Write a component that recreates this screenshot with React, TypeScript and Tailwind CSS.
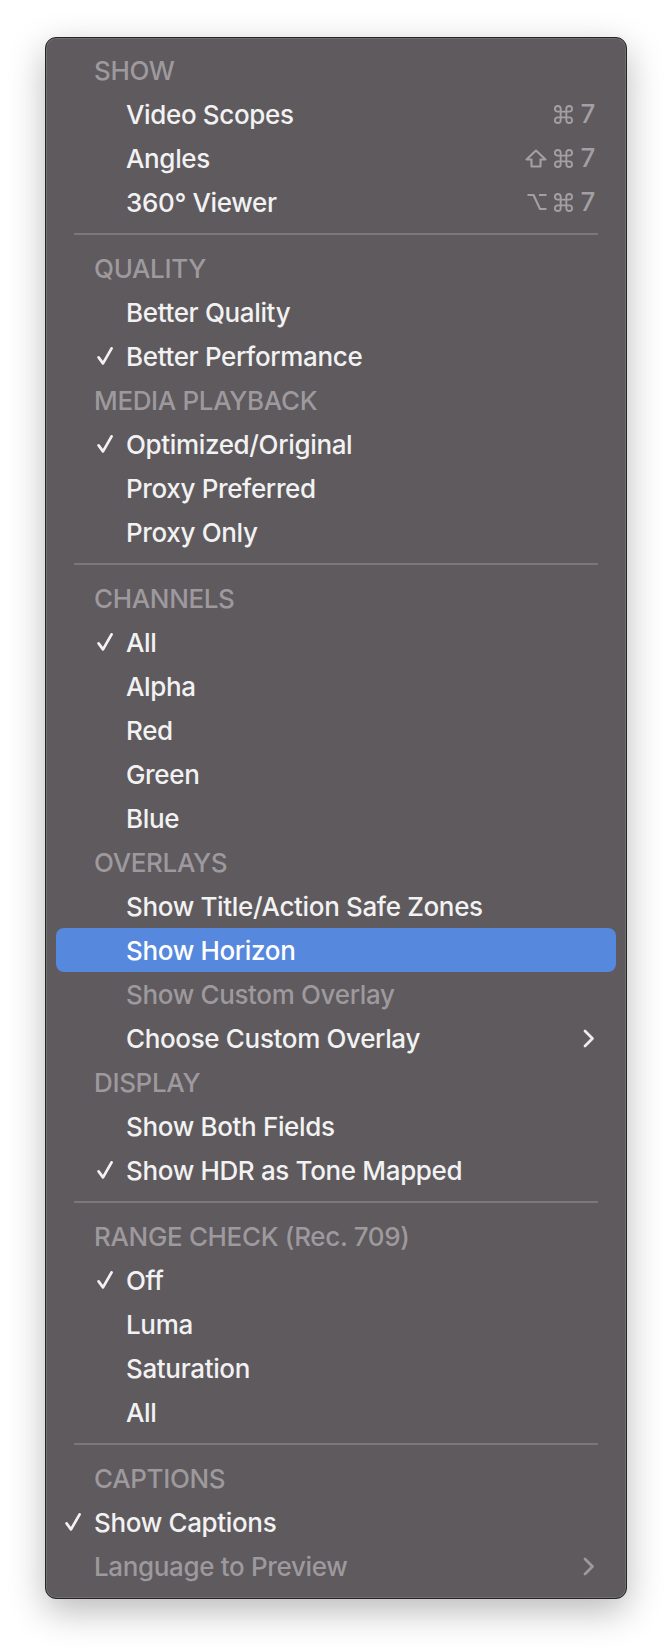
import React from "react";

type Row =
  | { kind: "header"; label: string }
  | { kind: "sep" }
  | {
      kind: "item";
      label: string;
      checked?: boolean;
      disabled?: boolean;
      highlight?: boolean;
      shortcut?: "cmd" | "shift" | "opt";
      submenu?: boolean;
      flush?: boolean;
    };

const rows: Row[] = [
  { kind: "header", label: "SHOW" },
  { kind: "item", label: "Video Scopes", shortcut: "cmd" },
  { kind: "item", label: "Angles", shortcut: "shift" },
  { kind: "item", label: "360° Viewer", shortcut: "opt" },
  { kind: "sep" },
  { kind: "header", label: "QUALITY" },
  { kind: "item", label: "Better Quality" },
  { kind: "item", label: "Better Performance", checked: true },
  { kind: "header", label: "MEDIA PLAYBACK" },
  { kind: "item", label: "Optimized/Original", checked: true },
  { kind: "item", label: "Proxy Preferred" },
  { kind: "item", label: "Proxy Only" },
  { kind: "sep" },
  { kind: "header", label: "CHANNELS" },
  { kind: "item", label: "All", checked: true },
  { kind: "item", label: "Alpha" },
  { kind: "item", label: "Red" },
  { kind: "item", label: "Green" },
  { kind: "item", label: "Blue" },
  { kind: "header", label: "OVERLAYS" },
  { kind: "item", label: "Show Title/Action Safe Zones" },
  { kind: "item", label: "Show Horizon", highlight: true },
  { kind: "item", label: "Show Custom Overlay", disabled: true },
  { kind: "item", label: "Choose Custom Overlay", submenu: true },
  { kind: "header", label: "DISPLAY" },
  { kind: "item", label: "Show Both Fields" },
  { kind: "item", label: "Show HDR as Tone Mapped", checked: true },
  { kind: "sep" },
  { kind: "header", label: "RANGE CHECK (Rec. 709)" },
  { kind: "item", label: "Off", checked: true },
  { kind: "item", label: "Luma" },
  { kind: "item", label: "Saturation" },
  { kind: "item", label: "All" },
  { kind: "sep" },
  { kind: "header", label: "CAPTIONS" },
  { kind: "item", label: "Show Captions", checked: true, flush: true },
  { kind: "item", label: "Language to Preview", disabled: true, submenu: true, flush: true },
];

function Check() {
  return (
    <svg width="16" height="18" viewBox="0 0 16 18" fill="none">
      <path d="M1.6 10.4 L6 16.4 L14.6 1.4" stroke="#f2f2f2" strokeWidth="2.7" strokeLinecap="round" strokeLinejoin="round" />
    </svg>
  );
}

function Cmd() {
  return (
    <svg width="19" height="19" viewBox="0 0 20 20" fill="none">
      <path
        d="M7 7 V4 A3 3 0 1 0 4 7 H16 A3 3 0 1 0 13 4 V16 A3 3 0 1 0 16 13 H4 A3 3 0 1 0 7 16 Z"
        stroke="#a39fa3"
        strokeWidth="2"
      />
    </svg>
  );
}

function Shift() {
  return (
    <svg width="22" height="19" viewBox="0 0 22 19" fill="none">
      <path d="M11 1.5 L20.5 10.5 H15.5 V17.5 H6.5 V10.5 H1.5 Z" stroke="#a39fa3" strokeWidth="2.1" strokeLinejoin="round" />
    </svg>
  );
}

function Opt() {
  return (
    <svg width="20" height="18" viewBox="0 0 20 18" fill="none">
      <path d="M0.5 2 H6.5 L13 16 H19.5 M12 2 H19.5" stroke="#a39fa3" strokeWidth="2.2" />
    </svg>
  );
}

function Chevron({ color }: { color: string }) {
  return (
    <svg width="12" height="19" viewBox="0 0 12 19" fill="none">
      <path d="M2 2 L9.5 9.5 L2 17" stroke={color} strokeWidth="2.8" strokeLinecap="round" strokeLinejoin="round" />
    </svg>
  );
}

function Shortcut({ kind }: { kind: "cmd" | "shift" | "opt" }) {
  return (
    <div className="flex items-center gap-[7px] text-[#a39fa3]">
      {kind === "shift" && <Shift />}
      {kind === "opt" && <Opt />}
      <Cmd />
      <span className="leading-none">7</span>
    </div>
  );
}

export default function App() {
  return (
    <div
      className="min-h-[1652px] bg-white pl-[45px] pt-[37px]"
      style={{ fontFamily: "Inter, 'Noto Sans', sans-serif" }}
    >
      <div className="w-[582px] rounded-[11px] border border-[#262426] bg-[#5e5a5e] px-[10px] py-[10px] text-[26px] tracking-[-0.35px] [font-weight:450] shadow-[0_12px_36px_rgba(0,0,0,0.28),inset_0_0_0_1px_rgba(255,255,255,0.12)]">
        {rows.map((r, i) => {
          if (r.kind === "sep") {
            return (
              <div key={i} className="flex h-[22px] items-start px-[18px] pt-[9px]">
                <div className="h-[2px] w-full bg-[#7b777b]" />
              </div>
            );
          }
          if (r.kind === "header") {
            return (
              <div key={i} className="flex h-[44px] items-center pl-[38px] text-[#9d999d]">
                {r.label}
              </div>
            );
          }
          const textColor = r.disabled ? "text-[#9d999d]" : "text-[#f2f2f2]";
          return (
            <div
              key={i}
              className={`flex h-[44px] items-center pr-[21px] ${r.flush ? "pl-[9px]" : "pl-[41px]"} ${
                r.highlight ? "rounded-[8px] bg-[#5688de]" : ""
              } ${textColor}`}
            >
              <div className={`flex items-center ${r.flush ? "w-[29px]" : "w-[29px]"}`}>
                {r.checked && <Check />}
              </div>
              <span className={r.highlight ? "text-white" : ""}>{r.label}</span>
              <div className="flex-1" />
              {r.shortcut && <Shortcut kind={r.shortcut} />}
              {r.submenu && <Chevron color={r.disabled ? "#9d999d" : "#ececec"} />}
            </div>
          );
        })}
      </div>
    </div>
  );
}
